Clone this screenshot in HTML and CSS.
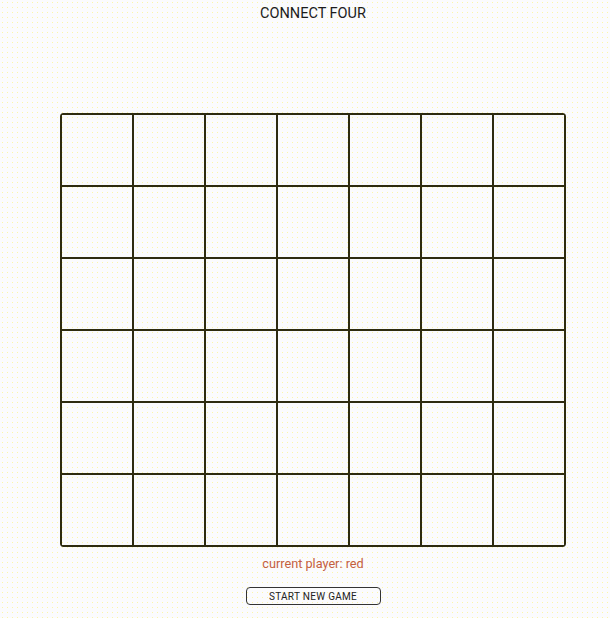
FILE: index.html
```html
<!DOCTYPE html>
<html>
<head>
<meta charset="utf-8">
<link rel="stylesheet" href="styles.css">
</head>
<body>
<div class="app">
  <h1 class="title">CONNECT FOUR</h1>
  <div class="board">
    <div class="cell"></div><div class="cell"></div><div class="cell"></div><div class="cell"></div><div class="cell"></div><div class="cell"></div><div class="cell"></div>
    <div class="cell"></div><div class="cell"></div><div class="cell"></div><div class="cell"></div><div class="cell"></div><div class="cell"></div><div class="cell"></div>
    <div class="cell"></div><div class="cell"></div><div class="cell"></div><div class="cell"></div><div class="cell"></div><div class="cell"></div><div class="cell"></div>
    <div class="cell"></div><div class="cell"></div><div class="cell"></div><div class="cell"></div><div class="cell"></div><div class="cell"></div><div class="cell"></div>
    <div class="cell"></div><div class="cell"></div><div class="cell"></div><div class="cell"></div><div class="cell"></div><div class="cell"></div><div class="cell"></div>
    <div class="cell"></div><div class="cell"></div><div class="cell"></div><div class="cell"></div><div class="cell"></div><div class="cell"></div><div class="cell"></div>
  </div>
  <p class="status">current player: red</p>
  <button class="new-game">START NEW GAME</button>
</div>
</body>
</html>
```
FILE: styles.css
```css
html, body {
  margin: 0;
  padding: 0;
}
body {
  background-color: #fbfbfd;
  background-image: radial-gradient(circle, #fcf6a8 0.6px, transparent 0.8px);
  background-size: 5px 5px;
  font-family: Roboto, "Liberation Sans", sans-serif;
  color: #1e1e1e;
  width: 610px;
  height: 618px;
  overflow: hidden;
}
.app {
  padding-left: 16px;
  display: flex;
  flex-direction: column;
  align-items: center;
}
.title {
  margin: 5px 0 0;
  font-size: 14.5px;
  line-height: 18px;
  font-weight: 400;
  color: #1c1c1c;
}
.board {
  margin-top: 90px;
  display: grid;
  grid-template-columns: repeat(7, 72px);
  grid-template-rows: repeat(6, 72px);
  border: 1px solid #2e2b10;
  border-radius: 3px;
}
.cell {
  border: 1px solid #2e2b10;
}
.status {
  margin: 9px 0 0;
  font-size: 12.7px;
  line-height: 16px;
  color: #c4603f;
}
.new-game {
  margin-top: 15px;
  width: 135px;
  height: 18px;
  padding: 0;
  border: 1px solid #333;
  border-radius: 4px;
  background: transparent;
  font-family: Roboto, "Liberation Sans", sans-serif;
  font-size: 10px;
  letter-spacing: 0.3px;
  color: #222;
}
```
